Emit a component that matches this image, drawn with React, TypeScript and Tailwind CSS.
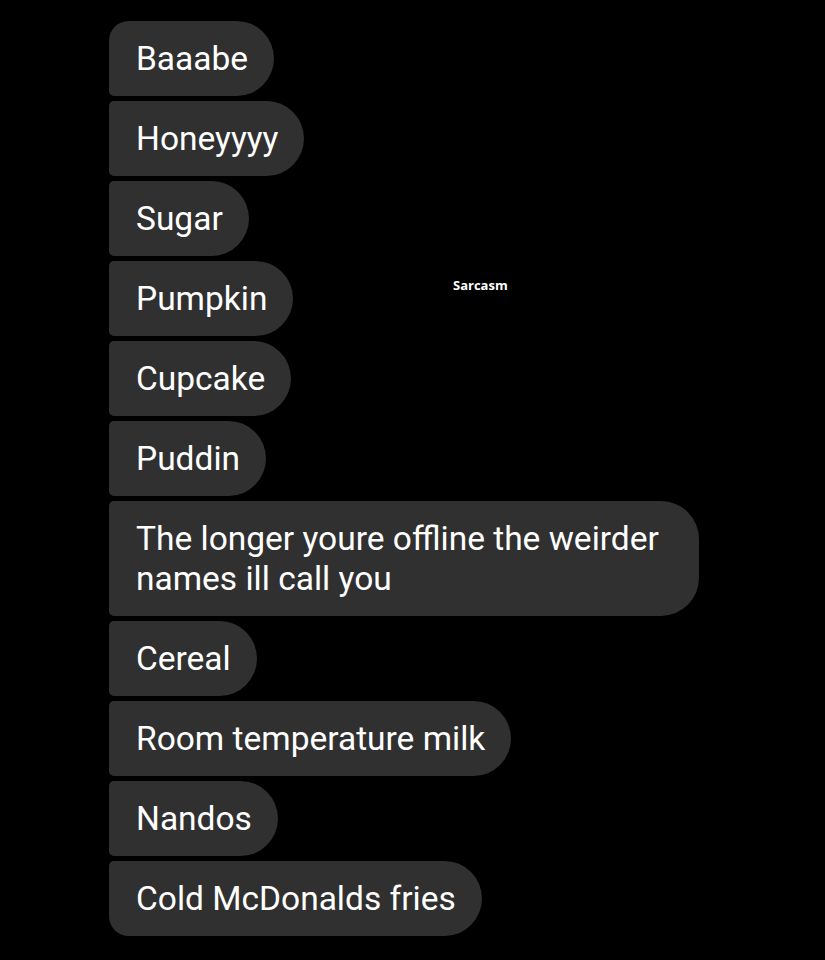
const messages = [
  "Baaabe",
  "Honeyyyy",
  "Sugar",
  "Pumpkin",
  "Cupcake",
  "Puddin",
  "The longer youre offline the weirder names ill call you",
  "Cereal",
  "Room temperature milk",
  "Nandos",
  "Cold McDonalds fries",
];

function bubbleCorners(i: number, total: number): string {
  if (i === 0) return "rounded-tl-[20px] rounded-bl-[5px]";
  if (i === total - 1) return "rounded-tl-[5px] rounded-bl-[20px]";
  return "rounded-l-[5px]";
}

export default function App() {
  return (
    <div
      className="relative w-[825px] h-[960px] bg-black overflow-hidden"
      style={{ fontFamily: "Roboto, 'Liberation Sans', sans-serif" }}
    >
      <div className="flex flex-col items-start gap-[5px] pt-[20.5px] pl-[109px]">
        {messages.map((text, i) => (
          <div
            key={i}
            className={`max-w-[590px] bg-[#303030] rounded-r-[38px] ${bubbleCorners(i, messages.length)} pl-[27px] pr-[26px] pt-[18.5px] pb-[16.5px] text-[33.5px] leading-[40px] text-white`}
          >
            {text}
          </div>
        ))}
      </div>
      {/* watermark */}
      <div
        className="absolute left-[453px] top-[276px] text-[13px] font-bold text-white"
        style={{ fontFamily: "'Open Sans', sans-serif" }}
      >
        Sarcasm
      </div>
    </div>
  );
}
